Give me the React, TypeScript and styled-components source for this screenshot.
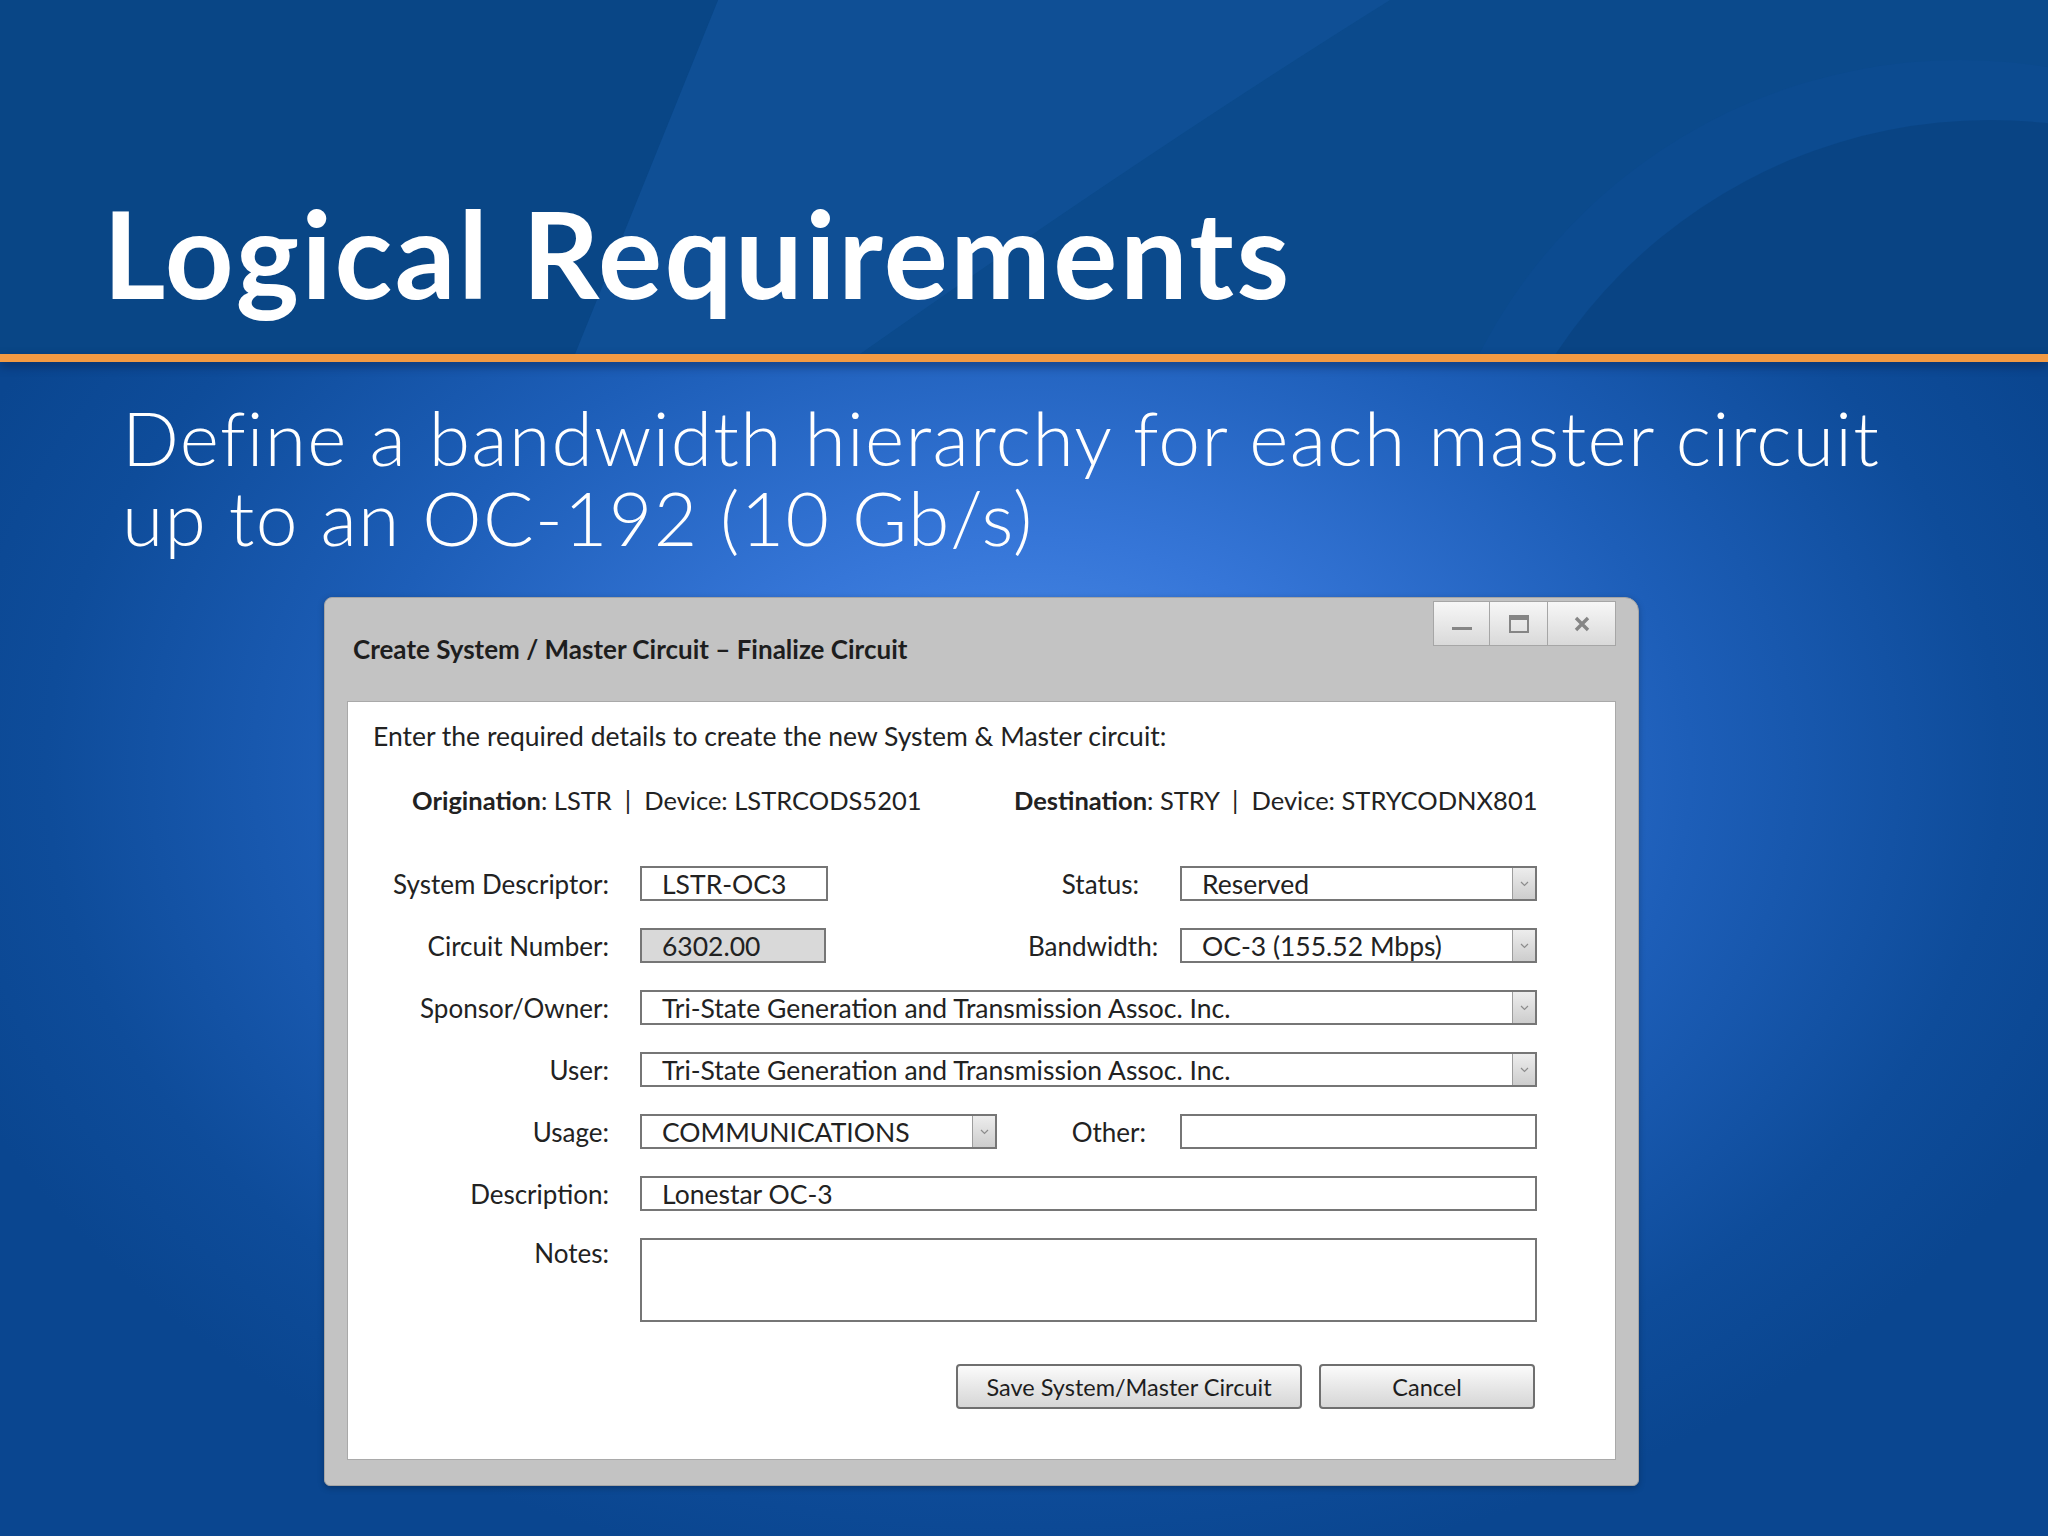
import styled, { createGlobalStyle } from "styled-components";

const GlobalStyle = createGlobalStyle`
  html, body {
    margin: 0;
    padding: 0;
    background: #0a4690;
  }
  body {
    font-family: Lato, "Liberation Sans", sans-serif;
  }
`;

function Chevron() {
  return (
    <svg width="9" height="6" viewBox="0 0 9 6">
      <path d="M1 1 L4.5 4.5 L8 1" fill="none" stroke="#8c8c8c" strokeWidth="1.2" />
    </svg>
  );
}

function Swoosh() {
  return (
    <HeaderArt viewBox="0 0 2048 354" preserveAspectRatio="none">
      <path d="M718 0 L1390 0 Q1150 150 860 354 L575 354 Z" fill="#1456a0" opacity="0.45" />
      <path d="M0 0 L718 0 L575 354 L0 354 Z" fill="#08427f" opacity="0.5" />
      <circle cx="1960" cy="600" r="540" fill="#0c4b90" />
      <circle cx="1990" cy="640" r="520" fill="#08427f" opacity="0.7" />
    </HeaderArt>
  );
}

interface SelectProps {
  value: string;
  span?: boolean;
}

function SelectField({ value, span }: SelectProps) {
  return (
    <Field $span={span}>
      <FieldText>{value}</FieldText>
      <DropButton>
        <Chevron />
      </DropButton>
    </Field>
  );
}

function App() {
  return (
    <>
      <GlobalStyle />
      <Slide>
        <Header>
          <Swoosh />
          <Title>Logical Requirements</Title>
        </Header>
        <OrangeRule />
        <Subtitle>
          <SubLine>Define a bandwidth hierarchy for each master circuit</SubLine>
          <SubLine>up to an OC-192 (10 Gb/s)</SubLine>
        </Subtitle>
        <Dialog>
          <TitleBar>
            <DialogTitle>Create System / Master Circuit – Finalize Circuit</DialogTitle>
            <WindowButtons>
              <WinButton $w={55}>
                <svg width="22" height="22" viewBox="0 0 22 22">
                  <rect x="1" y="14" width="20" height="3" fill="#858585" />
                </svg>
              </WinButton>
              <WinButton $w={57}>
                <svg width="22" height="20" viewBox="0 0 22 20">
                  <rect x="2" y="2" width="18" height="16" fill="none" stroke="#858585" strokeWidth="2" />
                  <rect x="2" y="2" width="18" height="4" fill="#858585" />
                </svg>
              </WinButton>
              <WinButton $w={67}>
                <svg width="20" height="20" viewBox="0 0 20 20">
                  <path d="M4 4 L16 16 M16 4 L4 16" stroke="#858585" strokeWidth="3.4" />
                </svg>
              </WinButton>
            </WindowButtons>
          </TitleBar>
          <Panel>
            <Intro>Enter the required details to create the new System &amp; Master circuit:</Intro>
            <Endpoints>
              <span>
                <b>Origination</b>: LSTR&nbsp; |&nbsp; Device: LSTRCODS5201
              </span>
              <span>
                <b>Destination</b>: STRY&nbsp; |&nbsp; Device: STRYCODNX801
              </span>
            </Endpoints>
            <Form>
              <Label>System Descriptor:</Label>
              <Field $width={188}>
                <FieldText>LSTR-OC3</FieldText>
              </Field>
              <Label $pad={10}>Status:</Label>
              <SelectField value="Reserved" />

              <Label>Circuit Number:</Label>
              <Field $width={186} $muted>
                <FieldText>6302.00</FieldText>
              </Field>
              <Label $pad={10}>Bandwidth:</Label>
              <SelectField value="OC-3 (155.52 Mbps)" />

              <Label>Sponsor/Owner:</Label>
              <SelectField value="Tri-State Generation and Transmission Assoc. Inc." span />

              <Label>User:</Label>
              <SelectField value="Tri-State Generation and Transmission Assoc. Inc." span />

              <Label>Usage:</Label>
              <SelectField value="COMMUNICATIONS" />
              <Label $pad={3}>Other:</Label>
              <Field />

              <Label>Description:</Label>
              <Field $span>
                <FieldText>Lonestar OC-3</FieldText>
              </Field>

              <Label $top>Notes:</Label>
              <Field $span $tall />
            </Form>
            <Actions>
              <ActionButton $w={346}>Save System/Master Circuit</ActionButton>
              <ActionButton $w={216}>Cancel</ActionButton>
            </Actions>
          </Panel>
        </Dialog>
      </Slide>
    </>
  );
}

const Slide = styled.div`
  width: 2048px;
  height: 1536px;
  overflow: hidden;
  display: flex;
  flex-direction: column;
  background:
    radial-gradient(ellipse 1150px 820px at 50% 50%, #4f8fea 0%, #3676d8 28%, #1d5eb8 58%, #0e4c9a 85%, #0a4690 100%);
`;

const Header = styled.header`
  position: relative;
  flex: none;
  height: 354px;
  background: #0b4a8c;
  overflow: hidden;
`;

const HeaderArt = styled.svg`
  position: absolute;
  inset: 0;
  width: 100%;
  height: 100%;
`;

const Title = styled.h1`
  position: relative;
  margin: 0;
  padding: 181px 0 0 103px;
  font-family: Lato, "Liberation Sans", sans-serif;
  font-size: 120px;
  font-weight: 700;
  line-height: 144px;
  height: 144px;
  color: #ffffff;
  letter-spacing: 2.5px;
`;

const OrangeRule = styled.div`
  position: relative;
  flex: none;
  height: 8px;
  background: #f39a43;
  box-shadow: 0 4px 10px rgba(10, 30, 70, 0.55);
`;

const Subtitle = styled.div`
  margin: 38px 0 0;
  padding-left: 122px;
  display: flex;
  flex-direction: column;
  font-family: Lato, "Liberation Sans", sans-serif;
  font-size: 75px;
  font-weight: 300;
  color: #ffffff;
  white-space: nowrap;
  letter-spacing: 1.3px;
`;

const SubLine = styled.span`
  display: block;
  height: 80px;
  line-height: 74px;
`;

const Dialog = styled.section`
  margin: 37px 0 0 324px;
  width: 1315px;
  box-sizing: border-box;
  padding: 0 22px 25px;
  background: #c3c3c3;
  border: 1px solid #a5a5a5;
  border-radius: 8px 14px 6px 6px;
  box-shadow: 0 2px 6px rgba(0, 0, 0, 0.25);
  font-family: Lato, "Liberation Sans", sans-serif;
  color: #222222;
`;

const TitleBar = styled.div`
  height: 103px;
  display: flex;
  justify-content: space-between;
  align-items: flex-start;
`;

const DialogTitle = styled.h2`
  margin: 36px 0 0 6px;
  font-size: 26px;
  font-weight: 700;
  line-height: 30px;
  color: #1e1e1e;
`;

const WindowButtons = styled.div`
  display: flex;
  margin-top: 3px;
  border: 1px solid #a6a6a6;
`;

const WinButton = styled.div<{ $w: number }>`
  width: ${(p) => p.$w}px;
  height: 43px;
  display: flex;
  align-items: center;
  justify-content: center;
  background: linear-gradient(#f7f7f7, #d9d9d9);
  & + & {
    border-left: 1px solid #a6a6a6;
  }
`;

const Panel = styled.div`
  background: #ffffff;
  border: 1px solid #a9a9a9;
  padding: 19px 80px 50px 25px;
`;

const Intro = styled.p`
  margin: 0;
  font-size: 26.5px;
  line-height: 30px;
`;

const Endpoints = styled.div`
  display: grid;
  grid-template-columns: 602px auto;
  margin: 34px 0 0 39px;
  font-size: 25.5px;
  line-height: 30px;
  white-space: nowrap;
  b {
    font-weight: 700;
  }
`;

const Form = styled.div`
  display: grid;
  grid-template-columns: 236px 357px 121px 357px;
  column-gap: 31px;
  row-gap: 27px;
  margin-top: 51px;
`;

const Label = styled.div<{ $top?: boolean; $pad?: number }>`
  align-self: ${(p) => (p.$top ? "start" : "center")};
  padding-right: ${(p) => p.$pad ?? 0}px;
  text-align: right;
  font-size: 26px;
  line-height: 30px;
  white-space: nowrap;
`;

const Field = styled.div<{ $span?: boolean; $width?: number; $muted?: boolean; $tall?: boolean }>`
  grid-column: ${(p) => (p.$span ? "2 / 5" : "auto")};
  width: ${(p) => (p.$width ? `${p.$width}px` : "auto")};
  height: ${(p) => (p.$tall ? 84 : 35)}px;
  box-sizing: border-box;
  display: flex;
  align-items: stretch;
  border: 2px solid #767676;
  background: ${(p) => (p.$muted ? "#d9d9d9" : "#ffffff")};
`;

const FieldText = styled.span`
  flex: 1;
  display: flex;
  align-items: center;
  padding-left: 20px;
  font-size: 26.5px;
  color: #222222;
  white-space: nowrap;
  overflow: hidden;
`;

const DropButton = styled.div`
  flex: none;
  width: 22px;
  display: flex;
  align-items: center;
  justify-content: center;
  border-left: 1px solid #9d9d9d;
  background: linear-gradient(#ededed, #cdcdcd);
`;

const Actions = styled.div`
  display: flex;
  justify-content: flex-end;
  gap: 17px;
  margin-top: 42px;
`;

const ActionButton = styled.div<{ $w: number }>`
  width: ${(p) => p.$w}px;
  height: 45px;
  box-sizing: border-box;
  display: flex;
  align-items: center;
  justify-content: center;
  border: 2px solid #6f6f6f;
  border-radius: 4px;
  background: linear-gradient(#fbfbfb, #e6e6e6 55%, #d6d6d6);
  font-size: 23.5px;
  color: #1e1e1e;
`;

export default App;
